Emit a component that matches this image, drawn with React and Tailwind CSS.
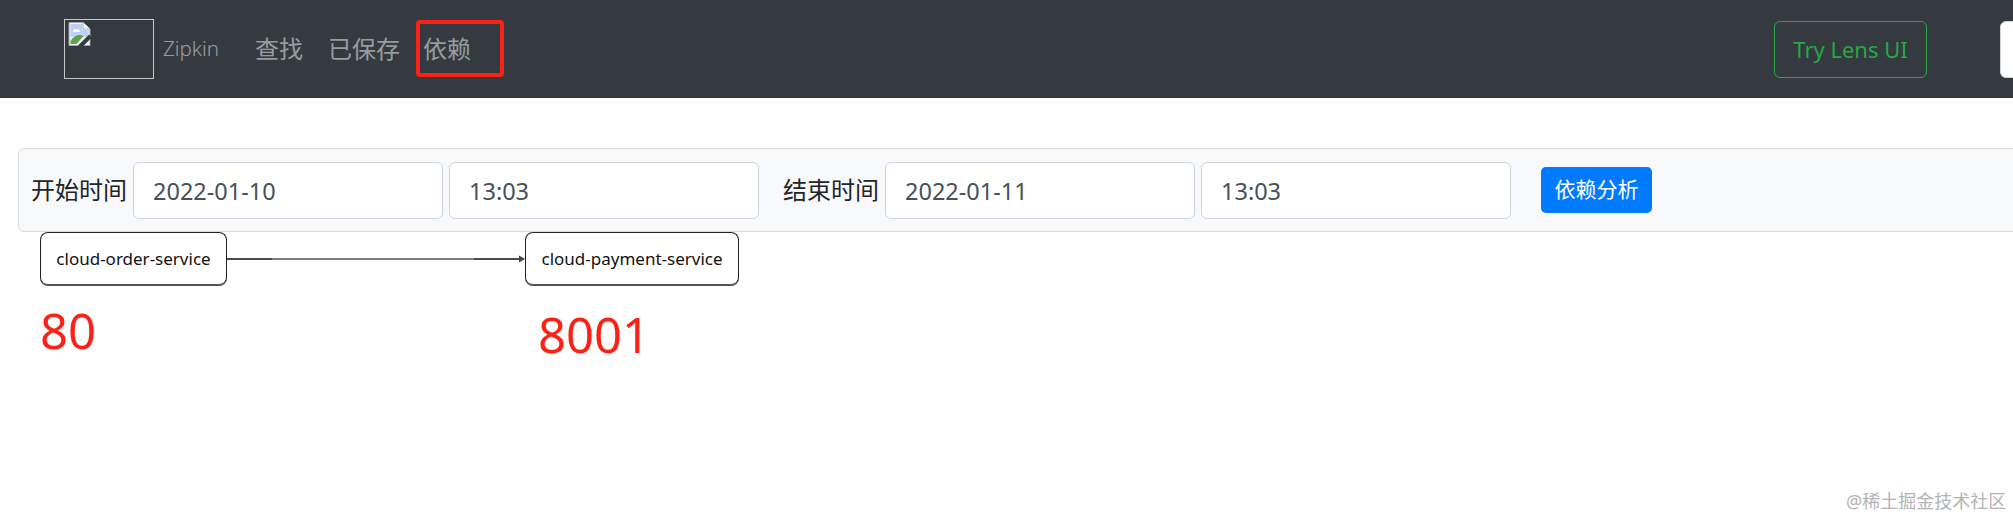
const sans = "font-['Noto_Sans','Noto_Sans_CJK_SC',sans-serif]";

function BrokenImage() {
  return (
    <svg width="23" height="24" viewBox="0 0 22 24" className="mt-[2px] ml-[3px] block">
      <path d="M0.5 0.5H14.5L21.5 7V23.5H0.5Z" fill="#eef2fa" stroke="#a8a8a8" />
      <path d="M14.5 0.5V7H21.5" fill="#fff" stroke="#a8a8a8" />
      <path d="M2 2H13.5V8H20V15H2Z" fill="#bcd2f3" />
      <path d="M4 10C5 6 10 6 12 10Z" fill="#fff" />
      <path d="M2 22V19C6 13 11 12 15 14L8 22Z" fill="#5da545" />
      <path d="M11 25L22 14" stroke="#343a40" strokeWidth="4" />
    </svg>
  );
}

function TextInput({ value }) {
  return (
    <div className="flex h-[57px] w-[310px] shrink-0 items-center rounded-[6px] border border-[#ced4da] bg-white pt-[3px] pl-[19px] text-[23.5px] text-[#495057]">
      {value}
    </div>
  );
}

function Node({ label, className }) {
  return (
    <div className={`absolute top-0 flex h-[54px] items-center justify-center rounded-[8px] border border-b-2 border-[#222] border-b-[#555] bg-white text-[17px] text-[#111] ${className}`}>
      {label}
    </div>
  );
}

export default function App() {
  return (
    <div className={`h-[524px] w-[2013px] overflow-hidden bg-white ${sans}`}>
      <nav className="flex h-[98px] items-center whitespace-nowrap bg-[#343a40]">
        <div className="ml-[64px] h-[60px] w-[90px] shrink-0 border border-[#c8c8c8]">
          <BrokenImage />
        </div>
        <span className="ml-[9px] w-[92px] shrink-0 pb-[2px] text-[20.5px] font-light text-white/50">Zipkin</span>
        <a className="shrink-0 text-[24px] text-white/50">查找</a>
        <a className="ml-[25px] shrink-0 text-[24px] text-white/50">已保存</a>
        <div className="relative ml-[23px] shrink-0 text-[24px] text-white/50">
          依赖
          <div className="absolute top-[-11px] left-[-7px] h-[57px] w-[88px] rounded-[4px] border-[4px] border-[#fb2115]"></div>
        </div>
        <button className="ml-[1303px] h-[57px] w-[153px] shrink-0 rounded-[6px] border border-[#28a745] text-[22px] text-[#28a745]">
          Try Lens UI
        </button>
        <div className="ml-[73px] h-[57px] w-[60px] shrink-0 rounded-[6px] border border-[#ced4da] bg-white"></div>
      </nav>

      <div className="mt-[50px] ml-[18px] flex h-[84px] w-[2100px] items-center rounded-[6px] border border-[#dcdcdc] bg-[#f8f9fa] pl-[12px] text-[24px] text-[#212529]">
        <span className="mr-[5px] w-[97px] shrink-0">开始时间</span>
        <TextInput value="2022-01-10" />
        <div className="ml-[6px] shrink-0"><TextInput value="13:03" /></div>
        <span className="mr-[5px] ml-[24px] w-[97px] shrink-0">结束时间</span>
        <TextInput value="2022-01-11" />
        <div className="ml-[6px] shrink-0"><TextInput value="13:03" /></div>
        <button className="ml-[30px] h-[46px] w-[111px] shrink-0 rounded-[5px] bg-[#007bff] text-[21px] text-white">依赖分析</button>
      </div>

      <div className="relative h-[190px]">
        <svg width="310" height="12" viewBox="0 0 310 12" className="absolute top-[21px] left-[224px]">
          <path d="M0 6H300" stroke="#555" strokeWidth="1.5" />
          <path d="M0 6H48M250 6H298" stroke="#3a3a3a" strokeWidth="1.5" />
          <path d="M295 2.5L301 6L295 9.5Z" fill="#444" />
        </svg>
        <Node label="cloud-order-service" className="left-[40px] w-[187px]" />
        <Node label="cloud-payment-service" className="left-[525px] w-[214px]" />
        <span className="absolute top-[62px] left-[40px] text-[49px] leading-[72px] text-[#fb2115]">80</span>
        <span className="absolute top-[66px] left-[538px] text-[49px] leading-[72px] text-[#fb2115]">8001</span>
        <span className="absolute top-[256px] left-[1846px] text-[18px] whitespace-nowrap text-[#b4b4b4]">@稀土掘金技术社区</span>
      </div>
    </div>
  );
}
